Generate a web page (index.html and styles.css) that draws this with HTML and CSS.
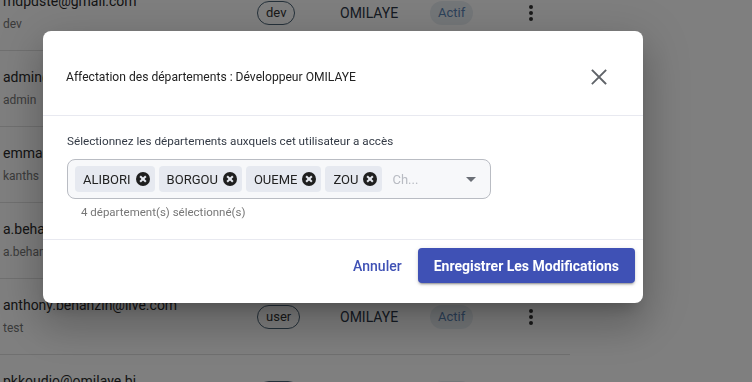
FILE: index.html
```html
<!DOCTYPE html>
<html lang="fr">
<head>
    <meta charset="UTF-8">
    <meta name="viewport" content="width=device-width, initial-scale=1.0">
    <title>Utilisateurs</title>
    <link rel="stylesheet" href="styles.css">
</head>
<body>
    <div class="user-list">
        <div class="user-row">
            <div class="user-info">
                <div class="user-email">mdpdste@gmail.com</div>
                <div class="user-name">dev</div>
            </div>
            <div class="cell-role"><span class="role-chip">dev</span></div>
            <div class="cell-company">OMILAYE</div>
            <div class="cell-status"><span class="status-chip">Actif</span></div>
            <div class="cell-menu"><span class="dots"></span></div>
        </div>
        <div class="user-row">
            <div class="user-info">
                <div class="user-email">admin@omilaye.bj</div>
                <div class="user-name">admin</div>
            </div>
            <div class="cell-role"><span class="role-chip">admin</span></div>
            <div class="cell-company">OMILAYE</div>
            <div class="cell-status"><span class="status-chip">Actif</span></div>
            <div class="cell-menu"><span class="dots"></span></div>
        </div>
        <div class="user-row">
            <div class="user-info">
                <div class="user-email">emmanuel.kanths@gmail.com</div>
                <div class="user-name">kanths</div>
            </div>
            <div class="cell-role"><span class="role-chip">user</span></div>
            <div class="cell-company">OMILAYE</div>
            <div class="cell-status"><span class="status-chip">Actif</span></div>
            <div class="cell-menu"><span class="dots"></span></div>
        </div>
        <div class="user-row">
            <div class="user-info">
                <div class="user-email">a.behanzin@omilaye.bj</div>
                <div class="user-name">a.behanzin</div>
            </div>
            <div class="cell-role"><span class="role-chip">user</span></div>
            <div class="cell-company">OMILAYE</div>
            <div class="cell-status"><span class="status-chip">Actif</span></div>
            <div class="cell-menu"><span class="dots"></span></div>
        </div>
        <div class="user-row">
            <div class="user-info">
                <div class="user-email">anthony.behanzin@live.com</div>
                <div class="user-name">test</div>
            </div>
            <div class="cell-role"><span class="role-chip">user</span></div>
            <div class="cell-company">OMILAYE</div>
            <div class="cell-status"><span class="status-chip">Actif</span></div>
            <div class="cell-menu"><span class="dots"></span></div>
        </div>
        <div class="user-row">
            <div class="user-info">
                <div class="user-email">pkkoudjo@omilaye.bj</div>
                <div class="user-name">pkkoudjo</div>
            </div>
            <div class="cell-role"><span class="role-chip">user</span></div>
            <div class="cell-company">OMILAYE</div>
            <div class="cell-status"><span class="status-chip">Actif</span></div>
            <div class="cell-menu"><span class="dots"></span></div>
        </div>
    </div>

    <div class="backdrop"></div>

    <div class="dialog">
        <div class="dialog-header">
            <div class="dialog-title">Affectation des départements : Développeur OMILAYE</div>
            <button class="close-btn" type="button" aria-label="Fermer">
                <svg width="16" height="16" viewBox="0 0 16 16">
                    <path d="M1.5 1.5 L14.5 14.5 M14.5 1.5 L1.5 14.5" stroke="#5f6368" stroke-width="1.8" stroke-linecap="square" fill="none"/>
                </svg>
            </button>
        </div>

        <div class="dialog-body">
            <label class="field-label">Sélectionnez les départements auxquels cet utilisateur a accès</label>
            <div class="multi-select">
                <span class="chip">ALIBORI <span class="chip-remove"></span></span>
                <span class="chip">BORGOU <span class="chip-remove"></span></span>
                <span class="chip">OUEME <span class="chip-remove"></span></span>
                <span class="chip">ZOU <span class="chip-remove"></span></span>
                <span class="placeholder">Ch...</span>
                <span class="caret"></span>
            </div>
            <div class="hint">4 département(s) sélectionné(s)</div>
        </div>

        <div class="dialog-footer">
            <button class="btn-text" type="button">Annuler</button>
            <button class="btn-primary" type="button">Enregistrer Les Modifications</button>
        </div>
    </div>
</body>
</html>
```

FILE: styles.css
```css
body {
    margin: 0;
    font-family: Roboto, "Liberation Sans", Arial, sans-serif;
    background-color: #ffffff;
    overflow: hidden;
}

/* background user table */
.user-list {
    width: 570px;
    margin-top: -25px;
}
.user-row {
    display: flex;
    align-items: center;
    height: 75px;
    border-bottom: 1px solid #e0e0e0;
}
.user-info {
    width: 254px;
    padding-left: 3px;
    white-space: nowrap;
    overflow: hidden;
}
.user-email {
    font-size: 14px;
    line-height: 20px;
    color: #2a2a2a;
    margin-top: -2px;
}
.user-name {
    font-size: 12px;
    line-height: 16px;
    margin-top: 5px;
    color: #777;
}
.cell-role {
    width: 83px;
}
.role-chip {
    display: inline-block;
    height: 22px;
    line-height: 22px;
    padding: 0 8px;
    border: 1px solid #4a6275;
    border-radius: 12px;
    font-size: 13px;
    color: #333;
}
.cell-company {
    width: 90px;
    font-size: 14px;
    color: #2c3646;
}
.cell-status {
    width: 99px;
}
.status-chip {
    display: inline-block;
    height: 24px;
    line-height: 24px;
    padding: 0 8px;
    border-radius: 12px;
    background-color: #e9eef3;
    color: #5a84b5;
    font-size: 13px;
}
.dots {
    display: block;
    width: 4px;
    height: 4px;
    border-radius: 50%;
    background-color: #333;
    box-shadow: 0 -6px 0 #333, 0 6px 0 #333;
}

.backdrop {
    position: fixed;
    inset: 0;
    background-color: rgba(0, 0, 0, 0.5);
}

/* dialog */
.dialog {
    position: fixed;
    left: 43px;
    top: 31px;
    width: 600px;
    background-color: #ffffff;
    border-radius: 8px;
    box-shadow: 0 11px 15px -7px rgba(0,0,0,0.2), 0 24px 38px 3px rgba(0,0,0,0.14), 0 9px 46px 8px rgba(0,0,0,0.12);
}
.dialog-header {
    display: flex;
    align-items: center;
    justify-content: space-between;
    height: 85px;
    padding: 8px 24px 0 23px;
    box-sizing: border-box;
    border-bottom: 1px solid #e8e9f0;
}
.dialog-title {
    font-size: 12.1px;
    color: #222;
}
.close-btn {
    background: none;
    border: none;
    padding: 0;
    width: 18px;
    height: 18px;
    display: flex;
    align-items: center;
    justify-content: center;
    margin-right: 11px;
}

.dialog-body {
    padding: 17px 24px 20px 24px;
    border-bottom: 1px solid #e8e9f0;
}
.field-label {
    display: block;
    font-size: 11.7px;
    line-height: 16px;
    color: #333a45;
    margin-bottom: 10px;
}
.multi-select {
    display: flex;
    align-items: center;
    gap: 4px;
    width: 424px;
    height: 40px;
    box-sizing: border-box;
    padding: 0 14px 0 7px;
    border: 1px solid #b9bcc3;
    border-radius: 8px;
    background-color: #f7f8fa;
}
.chip {
    display: inline-flex;
    align-items: center;
    gap: 5px;
    height: 26px;
    padding: 0 5px 0 8px;
    border-radius: 4px;
    background-color: #e6e9f0;
    font-size: 13px;
    color: #222;
}
.chip-remove {
    position: relative;
    width: 14px;
    height: 14px;
    border-radius: 50%;
    background-color: #1e1e1e;
}
.chip-remove::before,
.chip-remove::after {
    content: "";
    position: absolute;
    left: 3px;
    top: 6px;
    width: 8px;
    height: 2px;
    background-color: #e6e9f0;
    transform: rotate(45deg);
}
.chip-remove::after {
    transform: rotate(-45deg);
}
.placeholder {
    margin-left: 6px;
    font-size: 13px;
    color: #b8bbc2;
    flex: 1;
}
.caret {
    width: 0;
    height: 0;
    border-left: 5px solid transparent;
    border-right: 5px solid transparent;
    border-top: 5px solid #6b6f76;
}
.hint {
    margin: 6px 0 0 14px;
    font-size: 11.5px;
    line-height: 14px;
    color: #777;
}

.dialog-footer {
    display: flex;
    justify-content: flex-end;
    align-items: center;
    gap: 8px;
    padding: 8px 8px 20px 8px;
}
.btn-text {
    background: none;
    border: none;
    padding: 8px;
    font-family: inherit;
    font-size: 14px;
    font-weight: 500;
    color: #3f51b5;
}
.btn-primary {
    height: 35px;
    padding: 0 16px;
    border: none;
    border-radius: 4px;
    background-color: #3f51b5;
    color: #ffffff;
    font-family: inherit;
    font-size: 14px;
    font-weight: 700;
    box-shadow: 0 3px 1px -2px rgba(0,0,0,0.2), 0 2px 2px 0 rgba(0,0,0,0.14), 0 1px 5px 0 rgba(0,0,0,0.12);
}
```
